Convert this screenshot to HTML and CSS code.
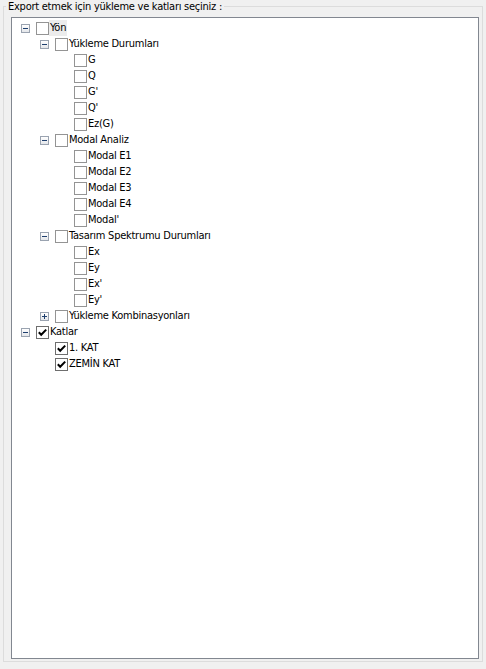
FILE: index.html
```html
<!DOCTYPE html>
<html lang="tr">

<head>
  <meta charset="UTF-8">
  <meta name="viewport" content="width=device-width, initial-scale=1.0">
  <title>Export</title>
  <link rel="stylesheet" href="styles.css">
</head>

<body>
  <fieldset class="group">
    <legend>Export etmek için yükleme ve katları seçiniz :</legend>
    <ul class="tree">
      <li>
        <div class="row"><span class="exp minus"></span><span class="chk"></span><span class="label hot">Yön</span></div>
        <ul>
          <li>
            <div class="row"><span class="exp minus"></span><span class="chk"></span><span class="label">Yükleme Durumları</span></div>
            <ul>
              <li><div class="row"><span class="exp none"></span><span class="chk"></span><span class="label">G</span></div></li>
              <li><div class="row"><span class="exp none"></span><span class="chk"></span><span class="label">Q</span></div></li>
              <li><div class="row"><span class="exp none"></span><span class="chk"></span><span class="label">G'</span></div></li>
              <li><div class="row"><span class="exp none"></span><span class="chk"></span><span class="label">Q'</span></div></li>
              <li><div class="row"><span class="exp none"></span><span class="chk"></span><span class="label">Ez(G)</span></div></li>
            </ul>
          </li>
          <li>
            <div class="row"><span class="exp minus"></span><span class="chk"></span><span class="label">Modal Analiz</span></div>
            <ul>
              <li><div class="row"><span class="exp none"></span><span class="chk"></span><span class="label">Modal E1</span></div></li>
              <li><div class="row"><span class="exp none"></span><span class="chk"></span><span class="label">Modal E2</span></div></li>
              <li><div class="row"><span class="exp none"></span><span class="chk"></span><span class="label">Modal E3</span></div></li>
              <li><div class="row"><span class="exp none"></span><span class="chk"></span><span class="label">Modal E4</span></div></li>
              <li><div class="row"><span class="exp none"></span><span class="chk"></span><span class="label">Modal'</span></div></li>
            </ul>
          </li>
          <li>
            <div class="row"><span class="exp minus"></span><span class="chk"></span><span class="label">Tasarım Spektrumu Durumları</span></div>
            <ul>
              <li><div class="row"><span class="exp none"></span><span class="chk"></span><span class="label">Ex</span></div></li>
              <li><div class="row"><span class="exp none"></span><span class="chk"></span><span class="label">Ey</span></div></li>
              <li><div class="row"><span class="exp none"></span><span class="chk"></span><span class="label">Ex'</span></div></li>
              <li><div class="row"><span class="exp none"></span><span class="chk"></span><span class="label">Ey'</span></div></li>
            </ul>
          </li>
          <li>
            <div class="row"><span class="exp plus"></span><span class="chk"></span><span class="label">Yükleme Kombinasyonları</span></div>
          </li>
        </ul>
      </li>
      <li>
        <div class="row"><span class="exp minus"></span><span class="chk on"></span><span class="label">Katlar</span></div>
        <ul>
          <li><div class="row"><span class="exp none"></span><span class="chk on"></span><span class="label">1. KAT</span></div></li>
          <li><div class="row"><span class="exp none"></span><span class="chk on"></span><span class="label">ZEMİN KAT</span></div></li>
        </ul>
      </li>
    </ul>
  </fieldset>
</body>

</html>
```

FILE: styles.css
```css
* {
  margin: 0;
  padding: 0;
  box-sizing: border-box;
}

html,
body {
  height: 100%;
}

body {
  background-color: #f0f0f0;
  font-family: Tahoma, "DejaVu Sans Condensed", "Liberation Sans", sans-serif;
  font-size: 11px;
  letter-spacing: -0.25px;
  color: #000;

  display: flex;
  flex-direction: column;
  padding: 0 3px 7px 3px;
}

.group {
  flex: 1;
  min-height: 0;
  border: 1px solid #dcdcdc;
  padding: 4px 3px 2px 7px;

  display: flex;
  flex-direction: column;
}

.group legend {
  margin-left: -5px;
  padding: 0 2px;
  line-height: 13px;
}

.tree {
  flex: 1;
  list-style: none;
  background-color: #fff;
  border: 1px solid #828790;
  padding: 2px 0 0 9px;
}

.tree ul {
  list-style: none;
  padding-left: 19px;
}

.row {
  display: flex;
  align-items: center;
  height: 16px;
}

.exp {
  position: relative;
  flex: none;
  width: 9px;
  height: 9px;
  margin-right: 6px;
  border: 1px solid #9aa3b0;
  background: linear-gradient(#ffffff, #e4e6ea);
}

.exp.none {
  visibility: hidden;
}

/* minus bar and plus bar */
.exp::before,
.exp.plus::after {
  content: "";
  position: absolute;
  background-color: #1e3f6e;
}

.exp::before {
  left: 1px;
  top: 3px;
  width: 5px;
  height: 1px;
}

.exp.plus::after {
  left: 3px;
  top: 1px;
  width: 1px;
  height: 5px;
}

.chk {
  flex: none;
  width: 13px;
  height: 13px;
  border: 1px solid #949494;
  background-color: #fff;
}

.chk.on {
  border-color: #6e6e6e;
  background: #fff url("data:image/svg+xml,%3Csvg xmlns='http://www.w3.org/2000/svg' width='11' height='11'%3E%3Cpath d='M1.8 5.3 L4.2 7.8 L9.2 2.6' fill='none' stroke='%23000' stroke-width='2'/%3E%3C/svg%3E") no-repeat center;
}

.label {
  line-height: 16px;
  padding: 0 1px;
  white-space: nowrap;
}

.label.hot {
  background-color: #ececec;
}
```
